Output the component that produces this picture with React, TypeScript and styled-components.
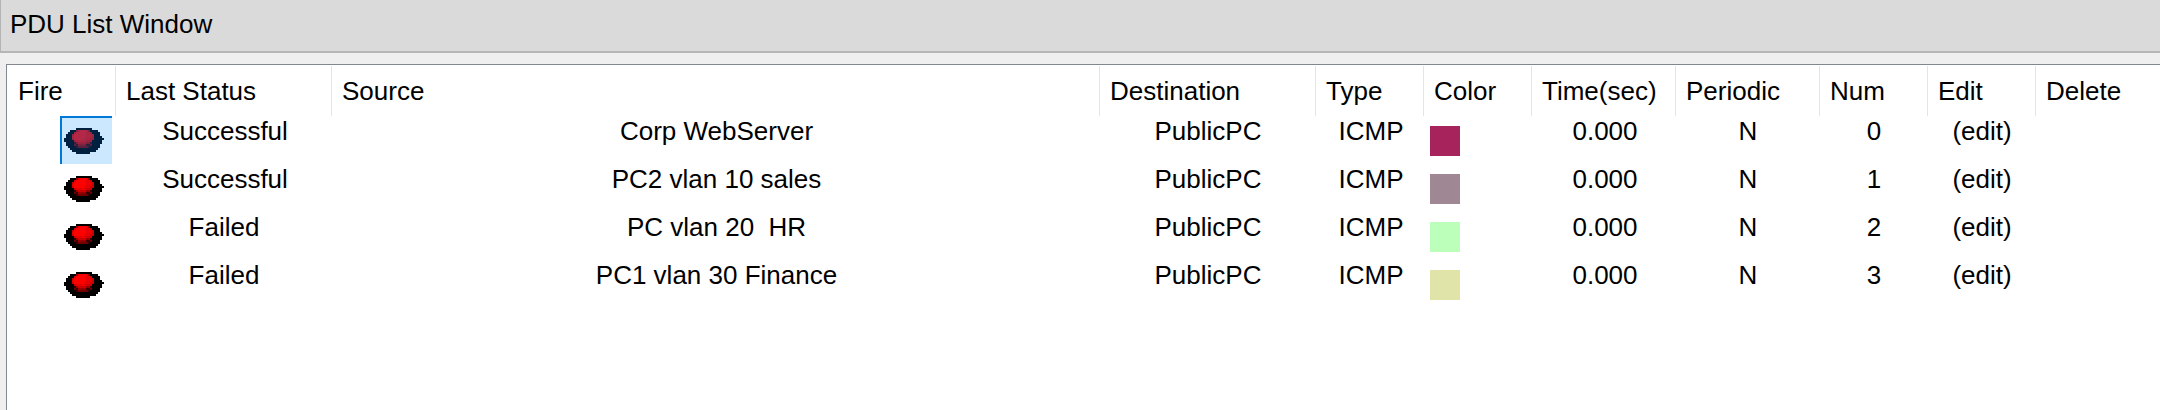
import React from 'react';
import styled, { createGlobalStyle } from 'styled-components';

const Global = createGlobalStyle`
  * { box-sizing: border-box; }
  body { margin: 0; background: #efefef; }
`;

const Window = styled.main`
  width: 100%;
  height: 410px;
  display: flex;
  flex-direction: column;
  background: #efefef;
  color: #000;
  font: 26px/30px 'Liberation Sans', Arial, sans-serif;
  overflow: hidden;
`;

const TitleBar = styled.header`
  height: 53px;
  flex: none;
  padding: 9px 0 0 9px;
  background: #dadada;
  border-left: 1px solid #b4b4b4;
  border-bottom: 2px solid #b6b6b6;
`;

const ListPanel = styled.section`
  flex: 1;
  margin: 11px 0 0 6px;
  padding: 1px 0 0 1px;
  background: #fff;
  border-top: 1px solid #828790;
  border-left: 1px solid #828790;
`;

const columns = '108px 216px 768px 216px 108px 108px 144px 144px 108px 108px 1fr';

const HeaderRow = styled.div`
  display: grid;
  grid-template-columns: ${columns};
  height: 50px;
`;

const HeaderCell = styled.div`
  padding: 10px 0 0 10px;
  white-space: nowrap;
  border-right: 1px solid #e5e5e5;
  &:last-child { border-right: 0; }
`;

const Row = styled.div`
  display: grid;
  grid-template-columns: ${columns};
  height: 48px;
`;

const Cell = styled.div<{ $shift?: number }>`
  text-align: center;
  white-space: pre;
  padding-left: ${(p) => p.$shift ?? 0}px;
`;

const FireCell = styled.div<{ $selected: boolean }>`
  width: 52px;
  height: 48px;
  margin-left: 52px;
  padding: 10px 0 0 2px;
  border: 2px solid ${(p) => (p.$selected ? '#0078d7' : 'transparent')};
  border-right: 0;
  border-bottom: 0;
  background: ${(p) => (p.$selected ? '#cce8ff' : 'transparent')};
`;

const ButtonArt = styled.svg`
  display: block;
  width: 40px;
  height: 26px;
`;

const Swatch = styled.div<{ $color: string }>`
  width: 30px;
  height: 30px;
  margin: 10px 0 0 6px;
  background: ${(p) => p.$color};
`;

/* Sprite legend: k base, a-d dome from bright to dark, e-f rim shades. */
const sprite = [
  '......kkkkkkkk......',
  '...kkkdbaaabdkkkk...',
  '..kkkcaaaaabbckkkk..',
  '.kkkcaaaaaabbbckkk..',
  '.kkkbaaaaaabbbckkkk.',
  'kkkkcaaaaabbbcckkkkk',
  'kkkkkcbbbbbccckkkkk.',
  '.kkkkfdccccddfkkkkk.',
  '.kkkkefddddffekkkk..',
  '..kkkkfeeeeefkkkkk..',
  '...kkkkkkkkkkkkkk...',
  '....kkkkkkkkkkkk....',
  '......kkkkkkk.......',
];

const normal: Record<string, string> = {
  k: '#000000', a: '#ff0000', b: '#ea0000', c: '#cc0000', d: '#980000', e: '#700000', f: '#380000',
};
const selected: Record<string, string> = {
  k: '#00203f', a: '#b32846', b: '#a82643', c: '#98243f', d: '#7a223f', e: '#58223f', f: '#2c213f',
};

function FireButton({ active }: { active: boolean }) {
  const palette = active ? selected : normal;
  return (
    <ButtonArt viewBox="0 0 20 13" shapeRendering="crispEdges">
      {sprite.flatMap((line, y) =>
        [...line].map((ch, x) =>
          ch === '.' ? null : (
            <rect key={`${x}-${y}`} x={x} y={y} width="1" height="1" fill={palette[ch]} />
          ),
        ),
      )}
    </ButtonArt>
  );
}

const headings = [
  'Fire', 'Last Status', 'Source', 'Destination', 'Type', 'Color',
  'Time(sec)', 'Periodic', 'Num', 'Edit', 'Delete',
];

const pdus = [
  { status: 'Successful', source: 'Corp WebServer', color: '#a6235c' },
  { status: 'Successful', source: 'PC2 vlan 10 sales', color: '#9f8893' },
  { status: 'Failed', source: 'PC vlan 20  HR', color: '#bbffbb' },
  { status: 'Failed', source: 'PC1 vlan 30 Finance', color: '#e1e4a8' },
];

export default function App() {
  return (
    <Window>
      <Global />
      <TitleBar>PDU List Window</TitleBar>
      <ListPanel>
        <HeaderRow>
          {headings.map((h) => (
            <HeaderCell key={h}>{h}</HeaderCell>
          ))}
        </HeaderRow>
        {pdus.map((p, i) => (
          <Row key={i}>
            <FireCell $selected={i === 0}>
              <FireButton active={i === 0} />
            </FireCell>
            <Cell $shift={p.status === 'Failed' ? 0 : 2}>{p.status}</Cell>
            <Cell $shift={1}>{p.source}</Cell>
            <Cell>PublicPC</Cell>
            <Cell $shift={2}>ICMP</Cell>
            <Swatch $color={p.color} />
            <Cell $shift={2}>0.000</Cell>
            <Cell>N</Cell>
            <Cell>{i}</Cell>
            <Cell>(edit)</Cell>
            <Cell />
          </Row>
        ))}
      </ListPanel>
    </Window>
  );
}
